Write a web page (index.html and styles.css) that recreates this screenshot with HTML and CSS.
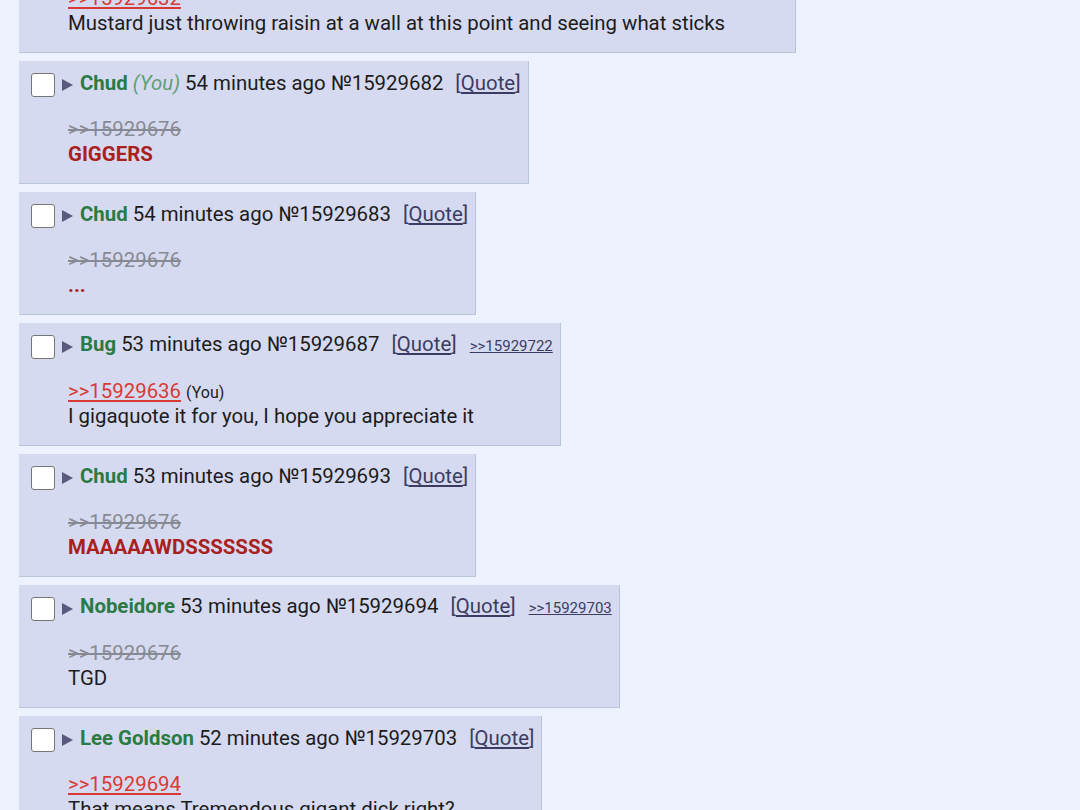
FILE: index.html
```html
<!DOCTYPE html>
<html>
<head>
<meta charset="utf-8">
<link rel="stylesheet" href="styles.css">
</head>
<body>
<div class="thread">
  <div class="post wide">
    <div class="header">
      <span class="check"></span><svg class="tri" width="11" height="12" viewBox="0 0 11 12"><polygon points="0,0 11,6 0,12" fill="#5a5a7e"/></svg>
      <span class="meta"><span class="name">Anonymous</span> 55 minutes ago №15929679<span class="quote-btn">[<u>Quote</u>]</span></span>
    </div>
    <div class="body">
      <a class="ql">&gt;&gt;15929632</a><br>
      Mustard just throwing raisin at a wall at this point and seeing what sticks
    </div>
  </div>

  <div class="post">
    <div class="header">
      <span class="check"></span><svg class="tri" width="11" height="12" viewBox="0 0 11 12"><polygon points="0,0 11,6 0,12" fill="#5a5a7e"/></svg>
      <span class="meta"><span class="name">Chud</span> <span class="you">(You)</span> 54 minutes ago №15929682<span class="quote-btn">[<u>Quote</u>]</span></span>
    </div>
    <div class="body">
      <span class="dead">&gt;&gt;15929676</span><br>
      <span class="red">GIGGERS</span>
    </div>
  </div>

  <div class="post">
    <div class="header">
      <span class="check"></span><svg class="tri" width="11" height="12" viewBox="0 0 11 12"><polygon points="0,0 11,6 0,12" fill="#5a5a7e"/></svg>
      <span class="meta"><span class="name">Chud</span> 54 minutes ago №15929683<span class="quote-btn">[<u>Quote</u>]</span></span>
    </div>
    <div class="body">
      <span class="dead">&gt;&gt;15929676</span><br>
      <span class="red">...</span>
    </div>
  </div>

  <div class="post">
    <div class="header">
      <span class="check"></span><svg class="tri" width="11" height="12" viewBox="0 0 11 12"><polygon points="0,0 11,6 0,12" fill="#5a5a7e"/></svg>
      <span class="meta"><span class="name">Bug</span> 53 minutes ago №15929687<span class="quote-btn">[<u>Quote</u>]</span><a class="backlink">&gt;&gt;15929722</a></span>
    </div>
    <div class="body">
      <a class="ql">&gt;&gt;15929636</a> <span class="small">(You)</span><br>
      I gigaquote it for you, I hope you appreciate it
    </div>
  </div>

  <div class="post">
    <div class="header">
      <span class="check"></span><svg class="tri" width="11" height="12" viewBox="0 0 11 12"><polygon points="0,0 11,6 0,12" fill="#5a5a7e"/></svg>
      <span class="meta"><span class="name">Chud</span> 53 minutes ago №15929693<span class="quote-btn">[<u>Quote</u>]</span></span>
    </div>
    <div class="body">
      <span class="dead">&gt;&gt;15929676</span><br>
      <span class="red">MAAAAAWDSSSSSSS</span>
    </div>
  </div>

  <div class="post">
    <div class="header">
      <span class="check"></span><svg class="tri" width="11" height="12" viewBox="0 0 11 12"><polygon points="0,0 11,6 0,12" fill="#5a5a7e"/></svg>
      <span class="meta"><span class="name">Nobeidore</span> 53 minutes ago №15929694<span class="quote-btn">[<u>Quote</u>]</span><a class="backlink">&gt;&gt;15929703</a></span>
    </div>
    <div class="body">
      <span class="dead">&gt;&gt;15929676</span><br>
      TGD
    </div>
  </div>

  <div class="post">
    <div class="header">
      <span class="check"></span><svg class="tri" width="11" height="12" viewBox="0 0 11 12"><polygon points="0,0 11,6 0,12" fill="#5a5a7e"/></svg>
      <span class="meta"><span class="name">Lee Goldson</span> 52 minutes ago №15929703<span class="quote-btn">[<u>Quote</u>]</span></span>
    </div>
    <div class="body">
      <a class="ql">&gt;&gt;15929694</a><br>
      That means Tremendous gigant dick right?
    </div>
  </div>
</div>
</body>
</html>
```

FILE: styles.css
```css
html, body {
  margin: 0;
  padding: 0;
  background: #eef2ff;
  overflow: hidden;
}
body {
  font-family: Roboto, "Liberation Sans", sans-serif;
  font-size: 20.4px;
  color: #1c1c1c;
}
.thread {
  display: flex;
  flex-direction: column;
  align-items: flex-start;
  gap: 8px;
  padding-left: 19px;
  margin-top: -70px;
}
.post {
  background: #d6daf0;
  border-right: 1px solid #b7c5d9;
  border-bottom: 1px solid #b7c5d9;
  padding: 10px 7px 16px 12px;
  box-sizing: border-box;
}
.post.wide {
  width: 777px;
}
.header {
  display: flex;
  align-items: center;
  height: 28px;
}
.check {
  width: 22px;
  height: 22px;
  background: #fff;
  border: 1px solid #767676;
  border-radius: 3px;
  margin-right: 7px;
  flex: none;
}
.tri {
  flex: none;
  margin-right: 7px;
}
.meta {
  white-space: pre;
  margin-bottom: 4px;
  line-height: 28px;
}
.name {
  color: #2b7a44;
  font-weight: bold;
}
.you {
  color: #5f9f73;
  font-style: italic;
}
.quote-btn {
  color: #3c3c62;
  margin-left: 12px;
}
.quote-btn u {
  text-underline-offset: 2px;
}
.backlink {
  color: #3c3c62;
  font-size: 15px;
  text-decoration: underline;
  margin-left: 13px;
}
.body {
  margin: 18px 0 0 37px;
  line-height: 25px;
}
.ql {
  color: #d93a34;
  text-decoration: underline;
  text-underline-offset: 2px;
}
.dead {
  color: #888a93;
  text-decoration: line-through;
}
.red {
  color: #a8211f;
  font-weight: bold;
}
.small {
  font-size: 16px;
  line-height: 1;
}
```
